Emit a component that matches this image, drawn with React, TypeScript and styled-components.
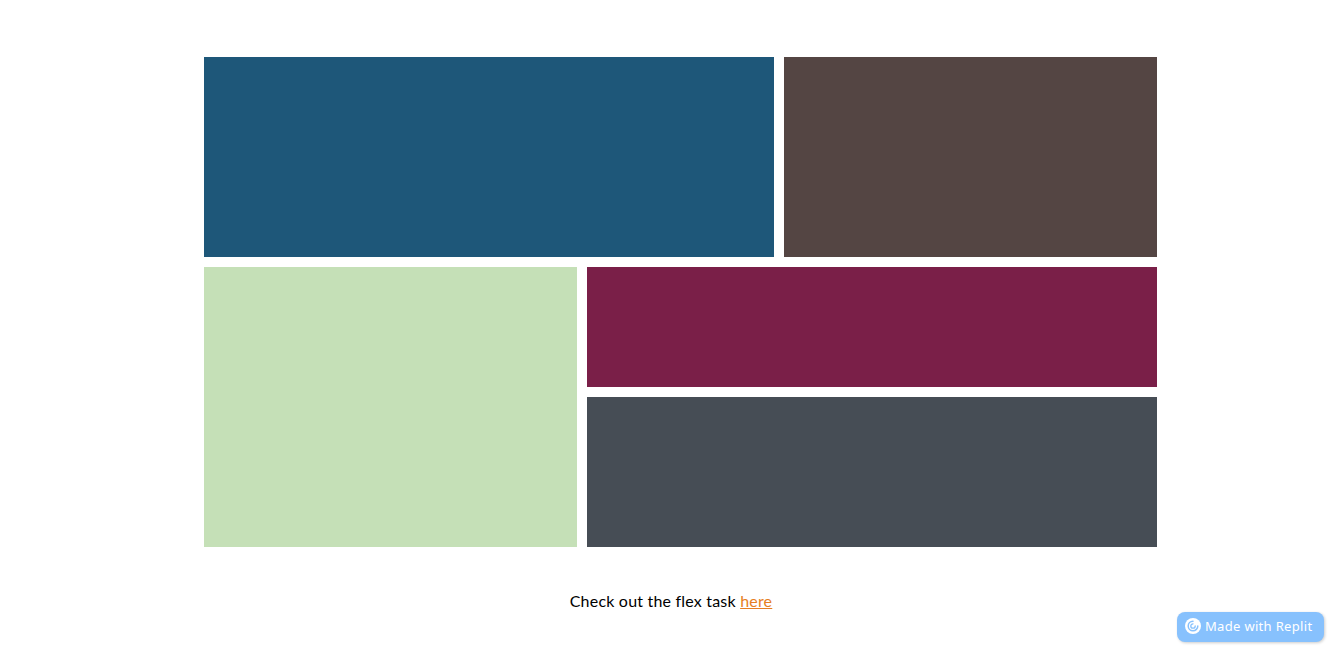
import styled, { createGlobalStyle } from 'styled-components';

const GlobalStyle = createGlobalStyle`
  html, body {
    margin: 0;
    padding: 0;
    height: 100%;
    background: #ffffff;
  }
`;

const Page = styled.div`
  position: relative;
  height: 659px;
  overflow: hidden;
  padding-top: 57px;
  box-sizing: border-box;
`;

const Mosaic = styled.div`
  display: grid;
  width: 953px;
  margin-left: 204px;
  grid-template-columns: 373px 187px 373px;
  grid-template-rows: 200px 120px 150px;
  gap: 10px;
`;

const Tile = styled.div<{ $color: string; $area: string }>`
  background: ${(p) => p.$color};
  grid-area: ${(p) => p.$area};
`;

const Caption = styled.p`
  margin: 44px 0 0;
  text-align: center;
  font-family: 'Lato', 'Noto Sans', sans-serif;
  font-size: 16px;
  line-height: 20px;
  letter-spacing: 0.2px;
  color: #000000;
`;

const TaskLink = styled.a`
  color: #e67e22;
  text-decoration: underline;
`;

const Badge = styled.a`
  position: absolute;
  right: 18px;
  bottom: 17px;
  display: flex;
  align-items: center;
  gap: 4px;
  width: 147px;
  height: 30px;
  box-sizing: border-box;
  padding: 0 0 2px 8px;
  border-radius: 8px;
  background: #87c1fd;
  box-shadow: 1px 1px 3px rgba(0, 0, 0, 0.2);
  color: #ffffff;
  font-family: 'Noto Sans', 'Inter', sans-serif;
  font-size: 13px;
  letter-spacing: 0.32px;
  line-height: 28px;
  white-space: nowrap;
  text-decoration: none;
`;

const ReplitSwirl = () => (
  <svg width="16" height="16" viewBox="0 0 16 16" aria-hidden="true">
    <circle cx="8" cy="8" r="8" fill="#ffffff" />
    <path
      d="M8 3.2a4.8 4.8 0 1 0 4.8 4.8"
      fill="none"
      stroke="#87c1fd"
      strokeWidth="1.5"
      strokeLinecap="round"
    />
    <path
      d="M8 5.8A2.2 2.2 0 1 0 10.2 8"
      fill="none"
      stroke="#87c1fd"
      strokeWidth="1.3"
      strokeLinecap="round"
    />
  </svg>
);

export default function App() {
  return (
    <Page>
      <GlobalStyle />
      <Mosaic>
        <Tile $color="#1e5779" $area="1 / 1 / 2 / 3" />
        <Tile $color="#544543" $area="1 / 3 / 2 / 4" />
        <Tile $color="#c5e0b7" $area="2 / 1 / 4 / 2" />
        <Tile $color="#7a1f48" $area="2 / 2 / 3 / 4" />
        <Tile $color="#464d55" $area="3 / 2 / 4 / 4" />
      </Mosaic>
      <Caption>
        Check out the flex task <TaskLink href="#">here</TaskLink>
      </Caption>
      <Badge href="#">
        <ReplitSwirl />
        Made with Replit
      </Badge>
    </Page>
  );
}
